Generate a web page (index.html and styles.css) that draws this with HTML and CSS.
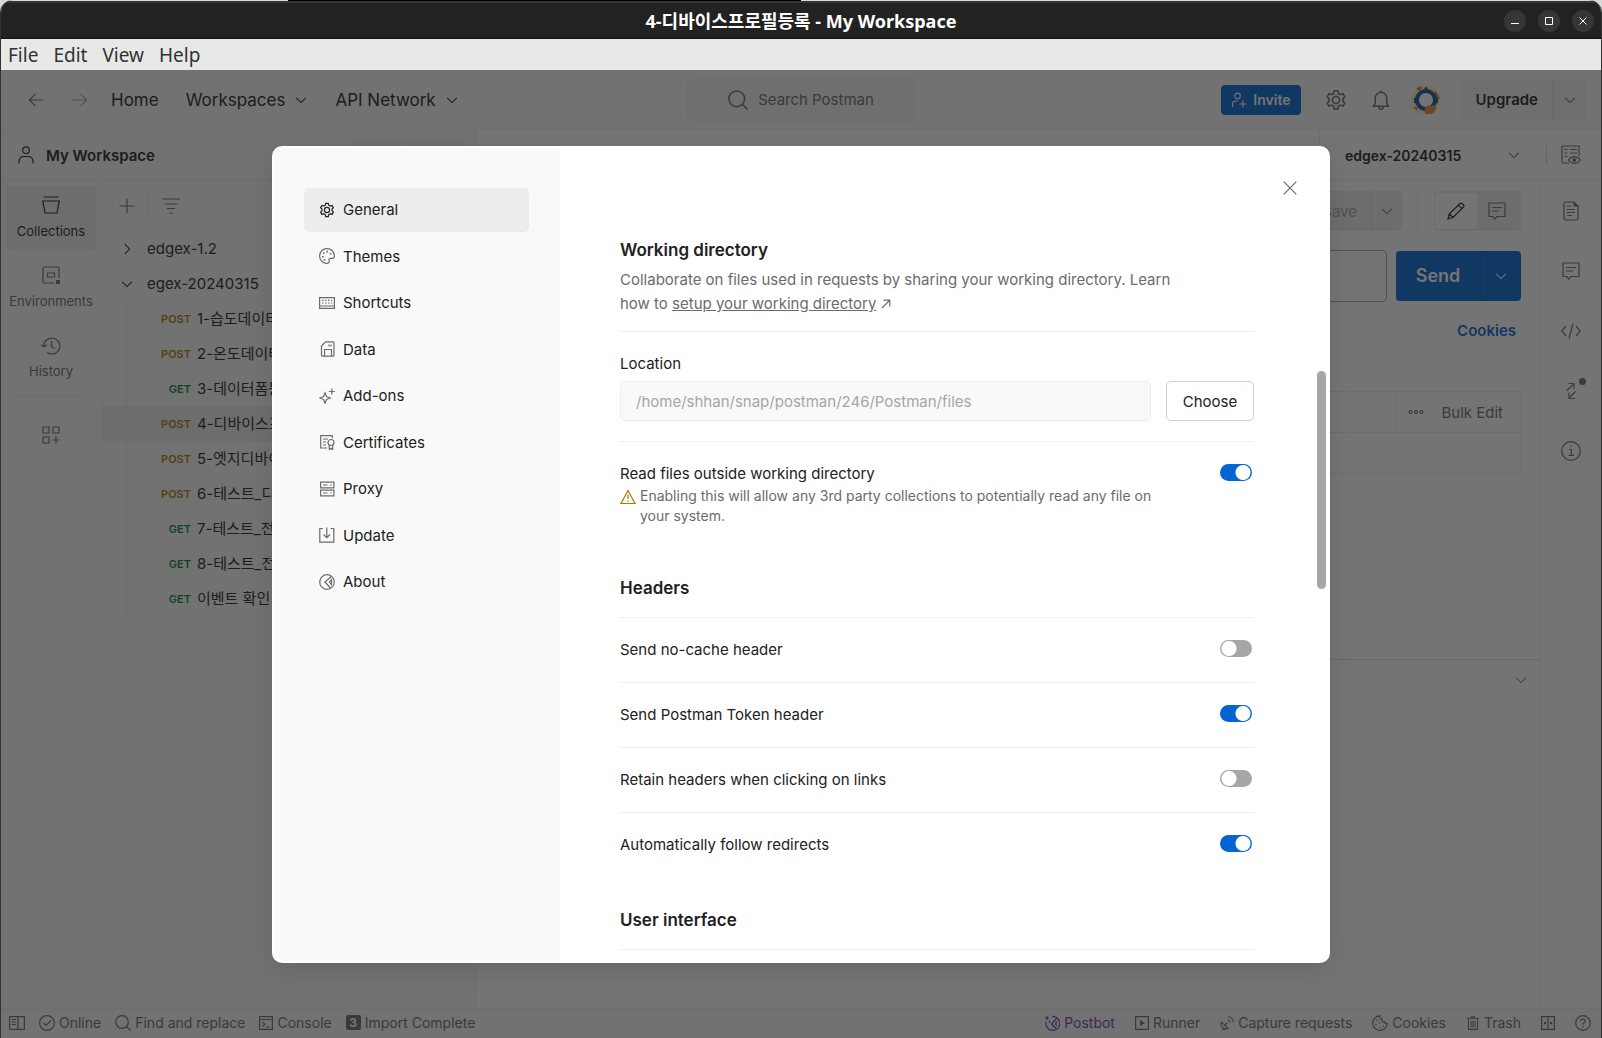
FILE: index.html
```
<!DOCTYPE html>
<html lang="ko">

<head>
  <meta charset="UTF-8" />
  <meta name="viewport" content="width=device-width, initial-scale=1.0" />
  <title>4-디바이스프로필등록 - My Workspace</title>
  <link rel="stylesheet" href="styles.css">
</head>

<body>
  <!-- icon sprite -->
  <svg class="sprite" aria-hidden="true">
    <symbol id="i-down" viewBox="0 0 16 16"><path d="M2.500 5.500 8 11l5.500-5.500" /></symbol>
    <symbol id="i-right" viewBox="0 0 16 16"><path d="M5.500 2.500 11 8l-5.500 5.500" /></symbol>
    <symbol id="i-back" viewBox="0 0 16 16"><path d="M15.500 8H1.500M7.500 1.800 1.300 8l6.200 6.200" /></symbol>
    <symbol id="i-forward" viewBox="0 0 16 16"><path d="M.5 8h14M8.500 1.800 14.700 8l-6.200 6.200" /></symbol>
    <symbol id="i-search" viewBox="0 0 16 16"><circle cx="7" cy="7" r="6.300" /><path d="m11.500 11.500 4 4" /></symbol>
    <symbol id="i-gear" viewBox="0 0 16 16">
      <path d="M6.700.8h2.600l.4 1.900 1.500.9 1.900-.7 1.300 2.300-1.400 1.300v1.800l1.400 1.300-1.300 2.300-1.900-.7-1.500.9-.4 2.100H6.700l-.4-2.100-1.500-.9-1.900.7-1.300-2.300L3 8.300V6.500L1.600 5.200l1.300-2.300 1.900.7 1.500-.9z" transform="translate(0 .5)" />
      <circle cx="8" cy="8" r="2.600" />
    </symbol>
    <symbol id="i-bell" viewBox="0 0 16 16"><path d="M8 .3v1.500M2 13h12l-1.400-2.300V6.500C12.600 3.800 10.600 1.800 8 1.800S3.400 3.800 3.400 6.500v4.200zM6.200 13c0 3.200 3.600 3.200 3.600 0" /></symbol>
    <symbol id="i-user" viewBox="0 0 16 18"><circle cx="8" cy="4.200" r="3.300" /><path d="M1 17.500v-1.800c0-3.300 2-5.200 5-5.200h4c3 0 5 1.900 5 5.200v1.800" /></symbol>
    <symbol id="i-invite" viewBox="0 0 16 16"><circle cx="6.500" cy="4" r="2.800" /><path d="M1.500 15v-2.500C1.500 10.500 3 9 5 9h2M12 8.500v7M8.500 12h7" /></symbol>
    <symbol id="i-collections" viewBox="0 0 18 18"><path d="M1.500 1h15M.8 5h16.400l-2.200 12H3z" /></symbol>
    <symbol id="i-env" viewBox="0 0 18 18"><path d="M12 17H2.500Q1 17 1 15.500v-13Q1 1 2.500 1h13Q17 1 17 2.500V12M5.500 7h7v4h-7z" /><path class="solid" d="M14 14h4v4h-4z" /></symbol>
    <symbol id="i-history" viewBox="0 0 20 18"><path d="M2.800 9a8 8 0 1 1 3.400 6.600M.5 7.500 2.800 10l3-2M10.500 4v5.500l3 2" /></symbol>
    <symbol id="i-grid" viewBox="0 0 18 18"><path d="M1 1h6v6H1zM11 1h6v6h-6zM1 11h6v6H1zM14 10.500v7M10.500 14h7" /></symbol>
    <symbol id="i-plus" viewBox="0 0 16 16"><path d="M8 .5v15M.5 8h15" /></symbol>
    <symbol id="i-filter" viewBox="0 0 18 16"><path d="M0 1h18M2.500 6h13M5 10.500h8M7.200 15h3.600" /></symbol>
    <symbol id="i-envview" viewBox="0 0 20 20">
      <path d="M8 18H2.500Q1 18 1 16.500V1h17v10M3.500 4.500h3M3.500 8h3M3.500 11.500h3M9 4.500h7M9 8h7" />
      <path d="M7.500 15c3-4.500 9-4.500 11.800 0-2.800 4.500-8.800 4.500-11.800 0z" /><circle class="solid" cx="13.400" cy="15" r="2" />
    </symbol>
    <symbol id="i-doc" viewBox="0 0 16 20"><path d="M11 1H2.500Q1 1 1 2.500v15Q1 19 2.500 19h11q1.500 0 1.500-1.500V5zM4 5h4M4 8.500h8M4 11.500h8M4 14.500h5" /><path class="solid" d="M10.500.5v5H15.500z" /></symbol>
    <symbol id="i-comment" viewBox="0 0 18 18"><path d="M1 1h16v13.500H9L6.500 17 5 14.500H1zM4 5.500h10M4 9h7" /></symbol>
    <symbol id="i-code" viewBox="0 0 20 16"><path d="M5 3 .8 8 5 13M15 3l4.200 5L15 13M12 .5l-4 15" /></symbol>
    <symbol id="i-swap" viewBox="0 0 16 18"><path d="M3.500 8.500 11 2M5.500 1.500H11V7M12.500 9.500 6 16M6 10.500V16.500h6" /></symbol>
    <symbol id="i-info" viewBox="0 0 20 20"><circle cx="10" cy="10" r="9.300" /><path d="M8 8.500h2.300V14M7.500 14.300h5.500M9.500 5.300h1.200" /></symbol>
    <symbol id="i-pencil" viewBox="0 0 18 18"><path d="M1 17l1.200-5L13 1.500q1.200-1 2.500.3l.7.7q1.300 1.300.3 2.500L6 15.500zM11.300 3.200l3.500 3.500M2.200 12 6 15.500" /></symbol>
    <symbol id="i-close" viewBox="0 0 14 14"><path d="m.7.7 12.600 12.600M13.300.7.700 13.300" /></symbol>
    <symbol id="i-palette" viewBox="0 0 16 16">
      <path d="M8 15.400A7.400 7.400 0 1 1 15.400 8c0 2-1.400 2.600-2.900 2.400-1.800-.3-2.800.6-2.400 2.100.5 1.700-.3 2.900-2.100 2.900z" />
      <path class="solid" d="M7.300 2.800h1.600v1.600H7.300zM4 4.500h1.600v1.600H4zM3 8h1.600v1.600H3zM4.800 11h1.600v1.600H4.800zM10.800 5h1.600v1.600h-1.600z" />
    </symbol>
    <symbol id="i-keyboard" viewBox="0 0 16 16"><path d="M.6 2.600h14.800v10.800H.6zM.6 11h14.800" /><path d="M3 5.300h1.500M6 5.300h1.500M9 5.300h1.500M12 5.300h1.200M3 8h1.500M6 8h1.500M9 8h1.500M12 8h1.200" /></symbol>
    <symbol id="i-data" viewBox="0 0 16 16"><path d="M6.500.8H14q1 0 1 1v12.400q0 1-1 1H3.500q-1 0-1-1V5zM5.500 15V8.500h7V15M10 3.500v2M12 3.500v2" /></symbol>
    <symbol id="i-sparkle" viewBox="0 0 16 16"><path d="M6 4.800 7.500 8.500 11.200 10 7.500 11.500 6 15.200 4.500 11.500.8 10l3.700-1.500zM12.800.5v6M9.800 3.500h6" /></symbol>
    <symbol id="i-cert" viewBox="0 0 16 16"><path d="M8 14H1.700V1.700h11.600V4M4 5h5M4 8h3M4 11h3" /><circle cx="12" cy="8.500" r="3" /><path d="M10.300 11v4.500L12 14.300l1.700 1.200V11" /></symbol>
    <symbol id="i-proxy" viewBox="0 0 16 16"><path d="M1.600 1.200h13.300v5.600H1.600zM1.600 9.200h13.300v5.600H1.600zM4 4h4.500M11 4h1.500M4 12h4.500M11 12h1.500" /></symbol>
    <symbol id="i-update" viewBox="0 0 16 16"><path d="M4 1.500H.8v13.700h14V1.500h-3.200M7.800.5v10M4.500 7.500l3.300 3.200 3.300-3.200" /></symbol>
    <symbol id="i-about" viewBox="0 0 16 16"><circle cx="8" cy="8" r="7.300" /><path d="M12.500 2.300 6 8l5.500 6M12.500 5.500 10.500 8l2 2.500z" /></symbol>
    <symbol id="i-ext" viewBox="0 0 10 10"><path d="M1 9 8.500 1.500M2.500 1.200h6.300v6.300" /></symbol>
    <symbol id="i-warn" viewBox="0 0 16 16"><path d="M8 1.500 15 14.500H1zM8 5.500v4.500M8 11.200v1.500" /></symbol>
    <symbol id="i-panel" viewBox="0 0 16 14"><path d="M.6.6h14.800v12.800H.6zM9 .6v12.800M2.500 3.500h4.500M2.500 6h4.500M2.500 8.500h4.500" /></symbol>
    <symbol id="i-check" viewBox="0 0 16 16"><circle cx="8" cy="8" r="7.400" /><path d="m4.500 8 2.500 2.500 5-5" /></symbol>
    <symbol id="i-console" viewBox="0 0 14 14"><path d="M.6.6h12.800v12.800H.6zM.6 3.500h12.800M3.500 6l2.300 2.200L3.500 10.500M7 11h4" /></symbol>
    <symbol id="i-postbot" viewBox="0 0 16 16"><path d="M8 1.500a7 7 0 1 1-6 5.500M12.500 3.500 7.500 9l4.500 4.500M13 6.500 11.500 9l1.500 2M1 3h4M3 1v4M5.500 5.500v2.500" /></symbol>
    <symbol id="i-play" viewBox="0 0 14 14"><path d="M.6.6h12.800v12.800H.6z" /><path class="solid" d="M5 4v6l5-3z" /></symbol>
    <symbol id="i-capture" viewBox="0 0 16 16"><path d="M1.500 7C0 12 4 16 9.500 14zM5.500 10.500l3-3M8.500 4.500c1.500 0 3 1.500 3 3M9 .8c3.500 0 6.200 2.700 6.200 6.200M2 15.300h4" /></symbol>
    <symbol id="i-cookie" viewBox="0 0 16 16"><path d="M8 .8a7.300 7.300 0 1 0 7.300 7.700c-1.500.5-2.800-.3-2.800-1.700-2 .5-3-1-2.500-2.800C8.300 4 7.300 2.500 8 .8zM5 4.500v1.200M4 9v1.200M7.500 7.500v1.200M8 12v1.200M11.500 10.500v1.200" /></symbol>
    <symbol id="i-trash" viewBox="0 0 14 16"><path d="M0 2.500h14M4.500 1h5M1.700 2.500v12.800h10.600V2.500M4.800 5v8M7 5v8M9.300 5v8" /></symbol>
    <symbol id="i-split" viewBox="0 0 14 14"><path d="M.6.6h12.800v12.800H.6zM7 .6v12.800" /><path class="solid" d="M3 6h2.200v2.200H3zM9 6h2.200v2.200H9z" /></symbol>
    <symbol id="i-help" viewBox="0 0 16 16"><circle cx="8" cy="8" r="7.300" /><path d="M5.800 6.200c0-3 4.400-2.800 4.400-.2C10.200 7.800 8 7.600 8 9.700M8 11v1.500" /></symbol>
  </svg>

  <div class="window">
    <header class="titlebar">
      <h1>4-디바이스프로필등록 - My Workspace</h1>
      <div class="win-controls">
        <button type="button" aria-label="Minimize"><svg viewBox="0 0 8 8"><path d="M0 6.500h8" /></svg></button>
        <button type="button" aria-label="Maximize"><svg viewBox="0 0 8 8"><path d="M.5.5h7v7h-7z" /></svg></button>
        <button type="button" aria-label="Close"><svg viewBox="0 0 8 8"><path d="m.5.5 7 7M7.500.5l-7 7" /></svg></button>
      </div>
    </header>
    <nav class="menubar">
      <button type="button">File</button>
      <button type="button">Edit</button>
      <button type="button">View</button>
      <button type="button">Help</button>
    </nav>

    <div class="app">
      <header class="topbar">
        <div class="topnav">
          <button type="button" class="nav-arrow" aria-label="Back"><svg class="icon s16"><use href="#i-back" /></svg></button>
          <button type="button" class="nav-arrow dim" aria-label="Forward"><svg class="icon s16"><use href="#i-forward" /></svg></button>
          <a href="#home">Home</a>
          <button type="button" class="drop">Workspaces <svg class="icon s14"><use href="#i-down" /></svg></button>
          <button type="button" class="drop">API Network <svg class="icon s14"><use href="#i-down" /></svg></button>
        </div>
        <button type="button" class="search"><svg class="icon s20"><use href="#i-search" /></svg>Search Postman</button>
        <div class="topactions">
          <button type="button" class="invite"><svg class="icon s16"><use href="#i-invite" /></svg>Invite</button>
          <button type="button" aria-label="Settings"><svg class="icon s22"><use href="#i-gear" /></svg></button>
          <button type="button" aria-label="Notifications"><svg class="icon s20"><use href="#i-bell" /></svg></button>
          <button type="button" class="avatar" aria-label="Account">
            <svg viewBox="0 0 30 30">
              <circle cx="15" cy="15" r="15" fill="#fff0b8" />
              <path d="M5 4q4-4 6-2l-2 4zM24 5l5 8-3 2-3-4zM2 22h4v4z" fill="#ff6c45" />
              <circle cx="15" cy="3.500" r="1.500" fill="#0a55a0" />
              <circle cx="15" cy="15" r="9" fill="#fff" stroke="#0a55a0" stroke-width="4" />
              <path d="M15 4v3M4 13v5M26 13v5" stroke="#0a55a0" stroke-width="2" />
              <path d="M13 26q2-7 7-5l5-1q1 6-4 9h-6z" fill="#ef8752" />
            </svg>
          </button>
          <div class="split upgrade">
            <button type="button">Upgrade</button>
            <button type="button" aria-label="Upgrade options"><svg class="icon s14"><use href="#i-down" /></svg></button>
          </div>
        </div>
      </header>

      <div class="wsbar">
        <div class="ws-name">
          <svg class="icon ws-icon"><use href="#i-user" /></svg>
          <strong>My Workspace</strong>
          <button type="button">New</button>
          <button type="button">Import</button>
        </div>
        <div class="env-pick">
          <button type="button" class="env-name">edgex-20240315 <svg class="icon s14"><use href="#i-down" /></svg></button>
          <button type="button" class="env-view" aria-label="Environment quick look"><svg class="icon s20"><use href="#i-envview" /></svg></button>
        </div>
      </div>

      <div class="workarea">
        <nav class="rail">
          <a href="#collections" class="active"><svg class="icon s18"><use href="#i-collections" /></svg>Collections</a>
          <a href="#environments"><svg class="icon s18"><use href="#i-env" /></svg>Environments</a>
          <a href="#history"><svg class="icon s20"><use href="#i-history" /></svg>History</a>
          <button type="button" aria-label="Configure workspace sidebar"><svg class="icon s18"><use href="#i-grid" /></svg></button>
        </nav>

        <aside class="collections">
          <div class="coll-tools">
            <button type="button" aria-label="Create new"><svg class="icon s16"><use href="#i-plus" /></svg></button>
            <div class="filter"><svg class="icon s18"><use href="#i-filter" /></svg></div>
          </div>
          <button type="button" class="folder"><svg class="icon s14"><use href="#i-right" /></svg>edgex-1.2</button>
          <button type="button" class="folder"><svg class="icon s14"><use href="#i-down" /></svg>egex-20240315</button>
          <ul class="requests">
            <li><span class="post">POST</span>1-습도데이터</li>
            <li><span class="post">POST</span>2-온도데이터</li>
            <li><span class="get">GET</span>3-데이터폼등록</li>
            <li class="current"><span class="post">POST</span>4-디바이스프로필등록</li>
            <li><span class="post">POST</span>5-엣지디바이스</li>
            <li><span class="post">POST</span>6-테스트_디바이스</li>
            <li><span class="get">GET</span>7-테스트_전체</li>
            <li><span class="get">GET</span>8-테스트_전체</li>
            <li><span class="get">GET</span>이벤트 확인</li>
          </ul>
        </aside>

        <main class="request">
          <div class="req-body">
            <div class="req-head">
              <div class="split save">
                <button type="button" disabled>Save</button>
                <button type="button" aria-label="Save options"><svg class="icon s14"><use href="#i-down" /></svg></button>
              </div>
              <div class="modes">
                <button type="button" class="on" aria-label="Build"><svg class="icon s18"><use href="#i-pencil" /></svg></button>
                <button type="button" aria-label="Comments"><svg class="icon s18"><use href="#i-comment" /></svg></button>
              </div>
            </div>
            <div class="url-row">
              <input type="text" aria-label="Request URL">
              <div class="split send">
                <button type="button">Send</button>
                <button type="button" aria-label="Send options"><svg class="icon s14"><use href="#i-down" /></svg></button>
              </div>
            </div>
            <div class="cookies"><a href="#cookies">Cookies</a></div>
            <table class="params">
              <tr>
                <td></td>
                <td class="bulk">
                  <div>
                    <svg class="icon dots" viewBox="0 0 16 6"><circle cx="2.500" cy="3" r="1.500" /><circle cx="8" cy="3" r="1.500" /><circle cx="13.500" cy="3" r="1.500" /></svg>
                    <button type="button">Bulk Edit</button>
                  </div>
                </td>
              </tr>
              <tr>
                <td colspan="2"></td>
              </tr>
            </table>
          </div>
          <div class="response">
            <button type="button" aria-label="Expand response"><svg class="icon s14"><use href="#i-down" /></svg></button>
          </div>
        </main>

        <aside class="tools">
          <button type="button" aria-label="Documentation"><svg class="icon s20"><use href="#i-doc" /></svg></button>
          <button type="button" aria-label="Comments"><svg class="icon s18"><use href="#i-comment" /></svg></button>
          <button type="button" aria-label="Code"><svg class="icon s20"><use href="#i-code" /></svg></button>
          <button type="button" class="has-dot" aria-label="Related requests"><svg class="icon s18"><use href="#i-swap" /></svg></button>
          <button type="button" aria-label="Info"><svg class="icon s20"><use href="#i-info" /></svg></button>
        </aside>
      </div>

      <footer class="statusbar">
        <div class="status-left">
          <button type="button" aria-label="Toggle sidebar"><svg class="icon s16"><use href="#i-panel" /></svg></button>
          <button type="button"><svg class="icon s16"><use href="#i-check" /></svg>Online</button>
          <button type="button"><svg class="icon s16"><use href="#i-search" /></svg>Find and replace</button>
          <button type="button"><svg class="icon s14"><use href="#i-console" /></svg>Console</button>
          <button type="button"><b class="count">3</b>Import Complete</button>
        </div>
        <div class="status-right">
          <button type="button" class="postbot"><svg class="icon s16"><use href="#i-postbot" /></svg>Postbot</button>
          <button type="button"><svg class="icon s14"><use href="#i-play" /></svg>Runner</button>
          <button type="button"><svg class="icon s14"><use href="#i-capture" /></svg>Capture requests</button>
          <button type="button"><svg class="icon s16"><use href="#i-cookie" /></svg>Cookies</button>
          <button type="button"><svg class="icon s14"><use href="#i-trash" /></svg>Trash</button>
          <button type="button" aria-label="Two pane view"><svg class="icon s14"><use href="#i-split" /></svg></button>
          <button type="button" aria-label="Help"><svg class="icon s16"><use href="#i-help" /></svg></button>
        </div>
      </footer>

      <!-- settings dialog -->
      <div class="backdrop">
        <div class="modal" role="dialog" aria-label="Settings">
          <nav class="settings-nav">
            <ul>
              <li><a href="#general" class="active"><svg class="icon s16"><use href="#i-gear" /></svg>General</a></li>
              <li><a href="#themes"><svg class="icon s16"><use href="#i-palette" /></svg>Themes</a></li>
              <li><a href="#shortcuts"><svg class="icon s16"><use href="#i-keyboard" /></svg>Shortcuts</a></li>
              <li><a href="#data"><svg class="icon s16"><use href="#i-data" /></svg>Data</a></li>
              <li><a href="#addons"><svg class="icon s16"><use href="#i-sparkle" /></svg>Add-ons</a></li>
              <li><a href="#certificates"><svg class="icon s16"><use href="#i-cert" /></svg>Certificates</a></li>
              <li><a href="#proxy"><svg class="icon s16"><use href="#i-proxy" /></svg>Proxy</a></li>
              <li><a href="#update"><svg class="icon s16"><use href="#i-update" /></svg>Update</a></li>
              <li><a href="#about"><svg class="icon s16"><use href="#i-about" /></svg>About</a></li>
            </ul>
          </nav>
          <div class="settings-body">
            <button type="button" class="close" aria-label="Close settings"><svg class="icon s14"><use href="#i-close" /></svg></button>
            <section>
              <h2>Working directory</h2>
              <p class="desc">Collaborate on files used in requests by sharing your working directory. Learn how to <a href="#setup">setup your working directory</a> <svg class="icon s10"><use href="#i-ext" /></svg></p>
              <div class="location">
                <label for="location">Location</label>
                <div class="location-row">
                  <input type="text" id="location" value="/home/shhan/snap/postman/246/Postman/files" disabled>
                  <button type="button">Choose</button>
                </div>
              </div>
              <div class="row tall">
                <div>
                  <label for="read-files">Read files outside working directory</label>
                  <p class="warn"><svg class="icon s16"><use href="#i-warn" /></svg>Enabling this will allow any 3rd party collections to potentially read any file on your system.</p>
                </div>
                <input type="checkbox" class="switch" id="read-files" checked>
              </div>
            </section>
            <section>
              <h2>Headers</h2>
              <div class="row">
                <label for="no-cache">Send no-cache header</label>
                <input type="checkbox" class="switch" id="no-cache">
              </div>
              <div class="row">
                <label for="token">Send Postman Token header</label>
                <input type="checkbox" class="switch" id="token" checked>
              </div>
              <div class="row">
                <label for="retain">Retain headers when clicking on links</label>
                <input type="checkbox" class="switch" id="retain">
              </div>
              <div class="row last">
                <label for="redirects">Automatically follow redirects</label>
                <input type="checkbox" class="switch" id="redirects" checked>
              </div>
            </section>
            <section>
              <h2>User interface</h2>
              <div class="row"></div>
            </section>
          </div>
          <div class="thumb"></div>
        </div>
      </div>
    </div>
  </div>
</body>

</html>
```
FILE: styles.css
```
* {
  box-sizing: border-box;
}

html,
body,
h1,
h2,
p,
ul {
  margin: 0;
  padding: 0;
}

body {
  font-family: Inter, "Noto Sans CJK KR", sans-serif;
  font-size: 15px;
  color: #212121;
  background: linear-gradient(90deg, #d5dad5 18%, #000 18%, #000 50%, #d5dad5 50%);
}

button,
input {
  font: inherit;
  color: inherit;
}

button {
  display: flex;
  align-items: center;
  justify-content: center;
  margin: 0;
  padding: 0;
  border: 0;
  background: none;
  white-space: nowrap;
}

a {
  color: inherit;
  text-decoration: none;
}

ul {
  list-style: none;
}

/* icons */
.sprite {
  display: none;
}

.icon {
  flex: none;
  fill: none;
  stroke: currentColor;
  stroke-width: 1.2;
}

.solid {
  fill: currentColor;
  stroke: none;
}

.s10 { width: 10px; height: 10px; }
.s14 { width: 14px; height: 14px; }
.s16 { width: 16px; height: 16px; }
.s18 { width: 18px; height: 18px; }
.s20 { width: 20px; height: 20px; }
.s22 { width: 22px; height: 22px; }

/* window frame */
.window {
  display: flex;
  flex-direction: column;
  height: 100vh;
  border: 1px solid #333;
  border-top: 0;
  border-bottom: 0;
  border-radius: 13px 13px 0 0;
  overflow: hidden;
}

.titlebar {
  display: grid;
  grid-template-columns: 1fr auto 1fr;
  align-items: center;
  height: 38px;
  padding: 0 7px;
  margin-top: 1px;
  background: #222;
  border-top: 2px solid #333633;
  border-bottom: 1px solid #111;
}

.titlebar h1 {
  grid-column: 2;
  font: bold 18px "Noto Sans", "Noto Sans CJK KR", sans-serif;
  line-height: 24px;
  color: #fff;
}

.win-controls {
  display: flex;
  justify-content: flex-end;
  gap: 12px;
}

.win-controls button {
  width: 22px;
  height: 22px;
  border-radius: 50%;
  background: #363636;
}

.win-controls svg {
  width: 8px;
  height: 8px;
  fill: none;
  stroke: #fff;
  overflow: visible;
}

.menubar {
  display: flex;
  gap: 15px;
  height: 31px;
  padding: 0 7px;
  background: #e8e8e6;
  color: #2e3436;
}

.menubar button {
  font: 19px "Noto Sans", sans-serif;
}

/* app shell */
.app {
  position: relative;
  flex: 1;
  display: flex;
  flex-direction: column;
  min-height: 0;
  background: #fff;
}

.topbar {
  display: grid;
  grid-template-columns: 1fr auto 1fr;
  align-items: center;
  height: 60px;
  padding: 0 15px;
  background: #f9f9f9;
  border-bottom: 1px solid #ededed;
}

.topnav {
  display: flex;
  align-items: center;
  padding-left: 12px;
  font-size: 17px;
}

.nav-arrow {
  width: 16px;
  margin-right: 28px;
  color: #6b6b6b;
}

.dim {
  margin-right: 23px;
  color: #a6a6a6;
}

.drop {
  gap: 9px;
  margin-left: 27px;
}

.search {
  gap: 10px;
  width: 229px;
  height: 42px;
  border: 1px solid #ededed;
  border-radius: 5px;
  background: #f2f2f2;
  color: #6b6b6b;
}

.topactions {
  display: flex;
  justify-content: flex-end;
  align-items: center;
  gap: 24px;
  color: #6b6b6b;
}

.invite {
  gap: 6px;
  height: 30px;
  padding: 0 10px;
  border-radius: 4px;
  background: #0265d2;
  color: #fff;
  font-size: 14px;
  font-weight: 600;
}

.avatar {
  margin: 0 -4px;
}

.avatar svg {
  width: 30px;
  height: 30px;
}

.split {
  display: flex;
  border-radius: 4px;
  background: #ededed;
}

.split button + button {
  width: 33px;
  border-left: 1px solid #d9d9d9;
}

.upgrade {
  height: 40px;
  background: #f2f2f2;
}

.upgrade button:first-child {
  padding: 0 15px;
  color: #212121;
  font-weight: 600;
}

.wsbar {
  display: flex;
  justify-content: space-between;
  height: 51px;
  background: #fff;
  border-bottom: 1px solid #ededed;
}

.ws-name {
  display: flex;
  align-items: center;
  width: 475px;
  padding: 0 10px 0 17px;
  background: #f9f9f9;
  border-right: 1px solid #ededed;
}

.ws-icon {
  width: 16px;
  height: 18px;
}

.ws-name strong {
  flex: 1;
  padding-left: 12px;
  font-weight: 600;
}

.ws-name button {
  height: 32px;
  margin-left: 5px;
  padding: 0 10px;
  border-radius: 4px;
  background: #f2f2f2;
  font-size: 13px;
}

.env-pick {
  display: flex;
  align-items: center;
  width: 282px;
  padding-right: 20px;
  border-left: 1px solid #ededed;
}

.env-name {
  flex: 1;
  justify-content: space-between;
  padding: 0 25px;
  font-size: 14px;
  font-weight: 600;
}

.env-name .icon {
  color: #6b6b6b;
}

.env-view {
  height: 20px;
  padding-left: 14px;
  border-left: 1px solid #d0d0d0;
  color: #6b6b6b;
}

.workarea {
  flex: 1;
  display: flex;
  min-height: 0;
}

.rail {
  display: flex;
  flex-direction: column;
  gap: 5px;
  width: 101px;
  padding: 5px;
  background: #f9f9f9;
  border-right: 1px solid #ededed;
  color: #6b6b6b;
  font-size: 13px;
}

.rail a {
  display: flex;
  flex-direction: column;
  align-items: center;
  justify-content: space-between;
  height: 65px;
  padding: 10px 0 12px;
  border-radius: 5px;
  line-height: 16px;
}

.rail .active {
  background: #ededed;
  color: #212121;
}

.rail button {
  margin: 0 10px;
  height: 77px;
  border-top: 1px solid #ededed;
}

.collections {
  width: 374px;
  padding-top: 10px;
  background: #f9f9f9;
  border-right: 1px solid #ededed;
}

.coll-tools {
  display: flex;
  gap: 12px;
  height: 40px;
  padding: 0 10px 10px 17px;
  color: #6b6b6b;
}

.filter {
  display: flex;
  align-items: center;
  flex: 1;
  padding-left: 14px;
  border: 1px solid #f0f0f0;
  border-radius: 4px;
}

.folder {
  justify-content: flex-start;
  gap: 13px;
  width: 100%;
  height: 35px;
  padding-left: 18px;
}

.requests {
  position: relative;
}

/* tree guide line */
.requests::before {
  content: "";
  position: absolute;
  left: 24px;
  top: 0;
  bottom: 0;
  border-left: 1px solid #e6e6e6;
}

.requests li {
  display: flex;
  align-items: center;
  gap: 6px;
  height: 35px;
  line-height: 20px;
  white-space: nowrap;
  overflow: hidden;
}

.requests .current {
  background: #ededed;
}

.requests span {
  width: 89px;
  text-align: right;
  font-size: 11px;
  font-weight: 600;
}

.post {
  color: #ad7a03;
}

.get {
  color: #007f31;
}

/* request builder */
.request {
  flex: 1;
  display: flex;
  flex-direction: column;
}

.req-body {
  flex: 1;
  padding: 10px 19px 0 16px;
}

.req-head {
  display: flex;
  justify-content: flex-end;
  height: 40px;
}

.save {
  margin-right: 15px;
}

.save button:first-child {
  padding: 0 14px 0 40px;
  color: #a6a6a6;
}

.save button + button {
  width: 31px;
  color: #6b6b6b;
}

.modes {
  display: flex;
  position: relative;
  width: 87px;
  margin-left: 17px;
  padding: 2px 3px 2px 1px;
  border-radius: 4px;
  background: #ededed;
  color: #6b6b6b;
}

.modes::before {
  content: "";
  position: absolute;
  left: -17px;
  height: 38px;
  border-left: 1px solid #ededed;
}

.modes button {
  flex: 1;
}

.modes .on {
  border-radius: 4px;
  background: #fff;
  color: #212121;
}

.url-row {
  display: flex;
  align-items: center;
  gap: 9px;
  margin-top: 19px;
}

.url-row input {
  flex: 1;
  height: 52px;
  border: 1px solid #a6a6a6;
  border-radius: 5px;
  background: #fff;
}

.send {
  height: 50px;
  background: #0265d2;
  color: #fff;
  font-size: 18px;
  font-weight: 600;
}

.send button:first-child {
  width: 84px;
  padding-bottom: 2px;
}

.send button + button {
  width: 41px;
  border-color: #0259b8;
}

.cookies {
  padding: 19px 5px 21px;
  text-align: right;
  line-height: 20px;
  font-weight: 600;
  color: #0265d2;
}

.params {
  width: 100%;
  margin-top: 29px;
  border-collapse: collapse;
  color: #6b6b6b;
}

.params td {
  height: 41px;
  padding: 0;
  border: 1px solid #ededed;
}

.params .bulk {
  width: 125px;
}

.bulk div {
  display: flex;
  align-items: center;
  justify-content: space-between;
  padding: 0 17px 0 12px;
}

.dots {
  width: 16px;
  height: 6px;
}

.response {
  display: flex;
  justify-content: flex-end;
  align-items: flex-start;
  height: 349px;
  padding: 13px 12px;
  border-top: 1px solid #e0e0e0;
  color: #8a8a8a;
}

.tools {
  display: flex;
  flex-direction: column;
  align-items: center;
  gap: 40px;
  width: 61px;
  padding-top: 20px;
  border-left: 1px solid #ededed;
  color: #6b6b6b;
}

.tools button {
  position: relative;
  height: 20px;
}

.has-dot::after {
  content: "";
  position: absolute;
  right: -6px;
  top: -3px;
  width: 7px;
  height: 7px;
  border-radius: 50%;
  background: #6b6b6b;
}

.statusbar {
  display: flex;
  justify-content: space-between;
  height: 30px;
  padding: 0 10px 2px 8px;
  background: #f9f9f9;
  border-top: 1px solid #ededed;
  color: #6b6b6b;
  font-size: 14px;
}

.statusbar button {
  gap: 4px;
}

.status-left {
  display: flex;
  gap: 14px;
}

.status-right {
  display: flex;
  gap: 20px;
}

.postbot {
  color: #743aa5;
}

.count {
  width: 15px;
  height: 15px;
  border-radius: 2px;
  background: #6b6b6b;
  color: #fff;
  font-size: 12px;
  line-height: 15px;
}

/* settings dialog */
.backdrop {
  position: absolute;
  inset: 0;
  display: flex;
  justify-content: center;
  padding: 76px 0 75px;
  background: rgba(28, 28, 28, 0.61);
}

.modal {
  position: relative;
  display: flex;
  width: 1058px;
  max-width: 90%;
  border: 2px solid #fff;
  border-radius: 10px;
  background: #fff;
  overflow: hidden;
  box-shadow: 0 8px 24px rgba(0, 0, 0, 0.1);
}

.settings-nav {
  width: 286px;
  padding: 40px 31px 40px 30px;
  background: #f9f9f9;
}

.settings-nav ul {
  display: flex;
  flex-direction: column;
  justify-content: space-between;
  height: 416px;
}

.settings-nav a {
  display: flex;
  align-items: center;
  gap: 8px;
  height: 44px;
  padding: 0 15px 1px;
  border-radius: 5px;
}

.settings-nav .icon {
  color: #6b6b6b;
}

.settings-nav .active {
  background: #ededed;
}

.settings-nav .active .icon {
  color: #212121;
}

.settings-body {
  flex: 1;
  padding: 90px 74px 0 60px;
  overflow: hidden;
}

.close {
  position: absolute;
  right: 31px;
  top: 33px;
  color: #6b6b6b;
}

.settings-body h2 {
  font-size: 17px;
  font-weight: 600;
  line-height: 24px;
}

.settings-body section + section {
  padding-top: 52px;
}

.settings-body section + section h2 {
  padding-bottom: 17px;
}

.desc {
  max-width: 560px;
  padding: 6px 0 15px;
  line-height: 24px;
  color: #6b6b6b;
}

.desc a {
  text-decoration: underline;
}

.location {
  padding: 22px 0 20px;
  border-top: 1px solid #ededed;
}

.location label {
  display: block;
  line-height: 20px;
}

.location-row {
  display: flex;
  gap: 15px;
  margin-top: 7px;
}

.location-row input {
  flex: 1;
  height: 40px;
  padding: 0 15px;
  border: 1px solid #ededed;
  border-radius: 5px;
  background: #f9f9f9;
  color: #a6a6a6;
}

.location-row button {
  width: 88px;
  border: 1px solid #d0d0d0;
  border-radius: 5px;
}

.row {
  display: flex;
  justify-content: space-between;
  height: 65px;
  padding: 22px 2px 0 0;
  border-top: 1px solid #ededed;
  line-height: 20px;
}

.tall {
  height: 83px;
}

.last {
  height: 44px;
}

.warn {
  display: flex;
  gap: 4px;
  max-width: 550px;
  padding-top: 2px;
  font-size: 14px;
  color: #6b6b6b;
}

.warn .icon {
  margin-top: 3px;
  color: #ad7a03;
}

.switch {
  appearance: none;
  flex: none;
  width: 32px;
  height: 17px;
  margin: 0;
  border-radius: 9px;
  background: radial-gradient(circle at 9px 50%, #fff 7px, #a6a6a6 8px);
}

.switch:checked {
  background: radial-gradient(circle at 23px 50%, #fff 7px, #0265d2 8px);
}

/* scroll thumb over the right edge of the dialog */
.thumb {
  position: absolute;
  right: 2px;
  top: 223px;
  width: 9px;
  height: 218px;
  border-radius: 5px;
  background: #a6a6a6;
}
```
